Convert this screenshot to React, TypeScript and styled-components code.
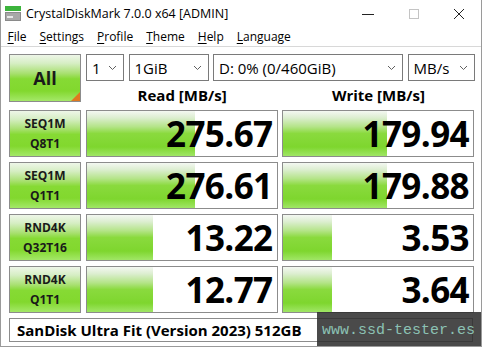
import styled, { createGlobalStyle } from 'styled-components';

const GlobalStyle = createGlobalStyle`
  html, body {
    margin: 0;
    padding: 0;
    background: #ffffff;
  }
  body {
    font-family: 'Open Sans', 'Noto Sans', 'DejaVu Sans', sans-serif;
    color: #000;
  }
`;

type Row = {
  line1: string;
  line2: string;
  read: string;
  write: string;
  readRatio: number;
  writeRatio: number;
};

const rows: Row[] = [
  { line1: 'SEQ1M', line2: 'Q8T1', read: '275.67', write: '179.94', readRatio: 0.57, writeRatio: 0.545 },
  { line1: 'SEQ1M', line2: 'Q1T1', read: '276.61', write: '179.88', readRatio: 0.57, writeRatio: 0.545 },
  { line1: 'RND4K', line2: 'Q32T16', read: '13.22', write: '3.53', readRatio: 0.35, writeRatio: 0.26 },
  { line1: 'RND4K', line2: 'Q1T1', read: '12.77', write: '3.64', readRatio: 0.35, writeRatio: 0.26 },
];

const menu = ['File', 'Settings', 'Profile', 'Theme', 'Help', 'Language'];

const Chevron = () => (
  <svg width="9" height="6" viewBox="0 0 9 6">
    <path d="M1 1 L4.5 4.5 L8 1" fill="none" stroke="#606060" strokeWidth="1" />
  </svg>
);

const AppIcon = () => (
  <svg width="16" height="15" viewBox="0 0 16 15">
    <rect x="0" y="0" width="16" height="5" fill="#3cb43c" />
    <rect x="0" y="6" width="16" height="9" fill="#8a8a8a" />
    <rect x="1" y="7" width="14" height="7" fill="#a8a8a8" />
    <rect x="2" y="10" width="6" height="2" fill="#e8e8e8" />
  </svg>
);

const App = () => {
  return (
    <>
      <GlobalStyle />
      <Window>
        <TitleBar>
          <TitleLeft>
            <AppIcon />
            <TitleText>CrystalDiskMark 7.0.0 x64 [ADMIN]</TitleText>
          </TitleLeft>
          <Controls>
            <ControlButton>
              <svg width="12" height="12" viewBox="0 0 12 12">
                <line x1="0" y1="6.5" x2="12" y2="6.5" stroke="#222" strokeWidth="1" />
              </svg>
            </ControlButton>
            <ControlButton>
              <svg width="12" height="12" viewBox="0 0 12 12">
                <rect x="1.5" y="1.5" width="9" height="9" fill="none" stroke="#c4c4c4" strokeWidth="1" />
              </svg>
            </ControlButton>
            <ControlButton>
              <svg width="12" height="12" viewBox="0 0 12 12">
                <path d="M1 1 L11 11 M11 1 L1 11" stroke="#222" strokeWidth="1" />
              </svg>
            </ControlButton>
          </Controls>
        </TitleBar>

        <MenuBar>
          {menu.map((m) => (
            <MenuItem key={m}>
              <u>{m[0]}</u>
              {m.slice(1)}
            </MenuItem>
          ))}
        </MenuBar>

        <Main>
          <AllButton>
            All
            <Corner />
          </AllButton>
          <TopRight>
            <Selects>
              <Select $width={38}>
                <span>1</span>
                <Chevron />
              </Select>
              <Select $width={80}>
                <span>1GiB</span>
                <Chevron />
              </Select>
              <Select $width={190}>
                <span>D: 0% (0/460GiB)</span>
                <Chevron />
              </Select>
              <Select $width={67}>
                <span>MB/s</span>
                <Chevron />
              </Select>
            </Selects>
            <Headers>
              <Header>Read [MB/s]</Header>
              <Header>Write [MB/s]</Header>
            </Headers>
          </TopRight>

          {rows.map((r, i) => (
            <RowGroup key={i}>
              <TestButton>
                <span>{r.line1}</span>
                <span>{r.line2}</span>
              </TestButton>
              <ValueBox>
                <Bar style={{ width: `${r.readRatio * 100}%` }} />
                <Value>{r.read}</Value>
              </ValueBox>
              <ValueBox>
                <Bar style={{ width: `${r.writeRatio * 100}%` }} />
                <Value>{r.write}</Value>
              </ValueBox>
            </RowGroup>
          ))}

          <NameBox>SanDisk Ultra Fit (Version 2023) 512GB</NameBox>
        </Main>

        <Watermark>www.ssd-tester.es</Watermark>
      </Window>
    </>
  );
};

const Window = styled.div`
  position: relative;
  width: 482px;
  height: 347px;
  box-sizing: border-box;
  border: 1px solid #9a9a9a;
  border-top: none;
  background: #ffffff;
  overflow: hidden;
`;

const TitleBar = styled.div`
  height: 27px;
  display: flex;
  align-items: center;
  justify-content: space-between;
`;

const TitleLeft = styled.div`
  display: flex;
  align-items: center;
  gap: 5px;
  padding-left: 4px;
  margin-top: -1px;
`;

const TitleText = styled.span`
  font-size: 12.5px;
  color: #000;
`;

const Controls = styled.div`
  display: flex;
  align-items: center;
`;

const ControlButton = styled.div`
  width: 46px;
  height: 27px;
  display: flex;
  align-items: center;
  justify-content: center;
  &:last-child {
    width: 44px;
  }
`;

const MenuBar = styled.div`
  height: 19px;
  display: flex;
  align-items: center;
  padding-left: 0;
  border-bottom: 1px solid #d8d8d8;
`;

const MenuItem = styled.span`
  font-size: 12px;
  padding: 0 6.5px;
  color: #000;
  u {
    text-decoration: underline;
    text-underline-offset: 2px;
  }
`;

const Main = styled.div`
  display: grid;
  grid-template-columns: 72px 1fr;
  column-gap: 5px;
  row-gap: 5px;
  padding: 7px 9px 0 8px;
`;

const greenGradient = `linear-gradient(
  to bottom,
  #eef6e8 0%,
  #d6eec4 18%,
  #a8e070 40%,
  #86da34 52%,
  #82d82e 78%,
  #a4e868 100%
)`;

const AllButton = styled.div`
  position: relative;
  height: 48px;
  box-sizing: border-box;
  border: 1px solid #8c8c8c;
  background: ${greenGradient};
  display: flex;
  align-items: center;
  justify-content: center;
  font-weight: 700;
  font-size: 18px;
  color: #1a1a1a;
`;

const Corner = styled.div`
  position: absolute;
  right: 0;
  bottom: 0;
  width: 0;
  height: 0;
  border-left: 9px solid transparent;
  border-bottom: 9px solid #e07820;
`;

const TopRight = styled.div`
  display: flex;
  flex-direction: column;
`;

const Selects = styled.div`
  display: flex;
  gap: 4.5px;
`;

const Select = styled.div<{ $width: number }>`
  width: ${(p) => p.$width}px;
  height: 27px;
  box-sizing: border-box;
  border: 1px solid #7a7a7a;
  background: #fff;
  display: flex;
  align-items: center;
  justify-content: space-between;
  padding: 0 6px 0 5px;
  font-size: 15px;
  color: #000;
`;

const Headers = styled.div`
  display: grid;
  grid-template-columns: 1fr 1fr;
  column-gap: 4px;
  flex: 1;
  align-items: center;
`;

const Header = styled.div`
  text-align: center;
  font-weight: 700;
  font-size: 15px;
  padding-top: 4px;
`;

const RowGroup = styled.div`
  grid-column: 1 / -1;
  display: grid;
  grid-template-columns: 72px 192px 192px;
  column-gap: 4.5px;
  height: 47px;
`;

const TestButton = styled.div`
  box-sizing: border-box;
  border: 1px solid #8c8c8c;
  background: ${greenGradient};
  display: flex;
  flex-direction: column;
  align-items: center;
  justify-content: center;
  font-weight: 700;
  font-size: 12px;
  line-height: 20px;
  color: #1a1a1a;
`;

const ValueBox = styled.div`
  position: relative;
  box-sizing: border-box;
  border: 1px solid #8c8c8c;
  background: #fff;
  display: flex;
  align-items: center;
  justify-content: flex-end;
  overflow: hidden;
`;

const Bar = styled.div`
  position: absolute;
  left: 0;
  top: 0;
  bottom: 0;
  background: linear-gradient(
    to bottom,
    #f4f8f2 0%,
    #dceed0 15%,
    #b4e488 35%,
    #8ada3e 50%,
    #7ed62e 80%,
    #a0e666 100%
  );
`;

const Value = styled.span`
  position: relative;
  font-weight: 700;
  font-size: 35px;
  line-height: 1;
  letter-spacing: -0.6px;
  padding-right: 4px;
  color: #000;
`;

const NameBox = styled.div`
  grid-column: 1 / -1;
  width: 464px;
  height: 24px;
  box-sizing: border-box;
  border: 1px solid #8c8c8c;
  background: #fff;
  display: flex;
  align-items: center;
  padding-left: 7px;
  font-weight: 700;
  font-size: 15px;
`;

const Watermark = styled.div`
  position: absolute;
  right: -1px;
  bottom: -1px;
  width: 165px;
  height: 35px;
  background: rgba(44, 44, 44, 0.86);
  display: flex;
  align-items: center;
  padding-left: 5px;
  box-sizing: border-box;
  font-family: 'Liberation Mono', 'DejaVu Sans Mono', monospace;
  font-size: 15px;
  color: #8cc2b4;
  padding-top: 2px;
`;

export default App;
